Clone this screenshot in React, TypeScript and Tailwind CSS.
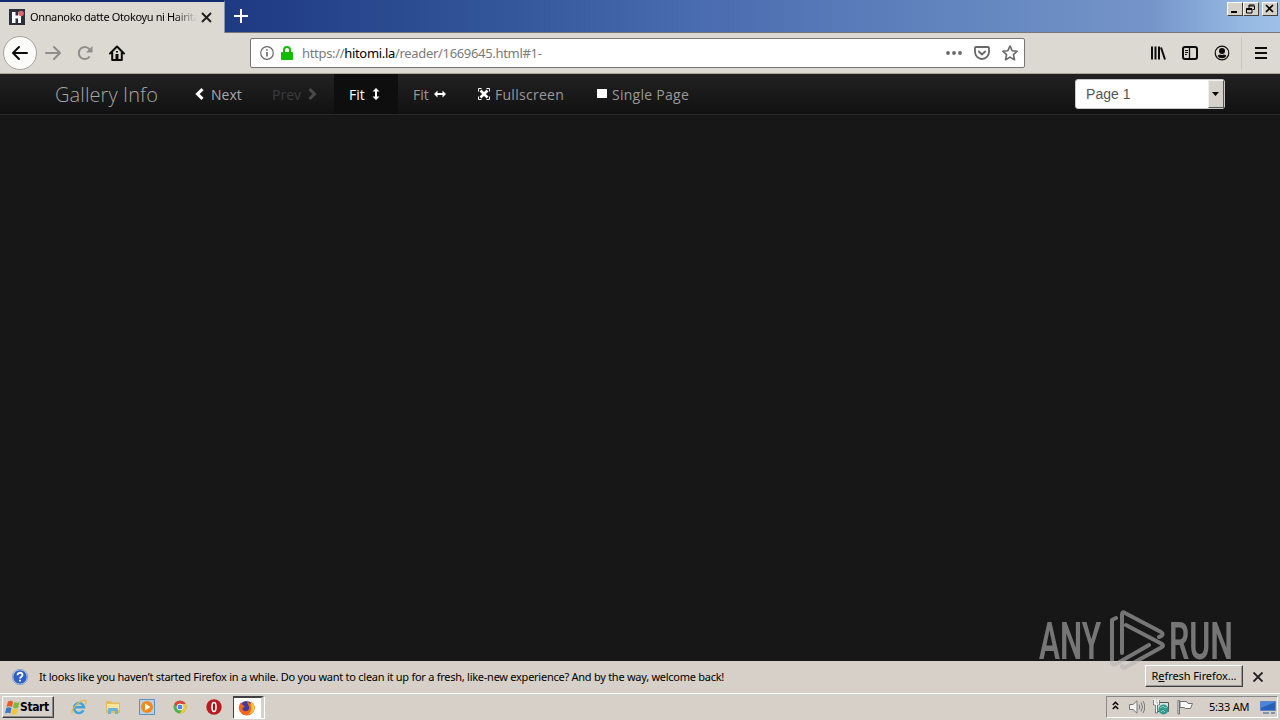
import React from 'react';

interface INavItem {
	label: string;
	className: string;
	icon: React.ReactNode;
	iconFirst?: boolean;
}

const navItems: INavItem[] = [
	{
		label: 'Next',
		className: 'w-[77px] pl-[15px] gap-[7px] text-[#a8a8a8]',
		iconFirst: true,
		icon: (
			<svg width="9" height="12" viewBox="0 0 9 12">
				<path d="M7.500 1.200 2.500 6l5 4.800" fill="none" stroke="#fff" strokeWidth="3" />
			</svg>
		),
	},
	{
		label: 'Prev',
		className: 'w-[77px] pl-[15px] gap-[7px] text-[#3c3c3c]',
		icon: (
			<svg width="9" height="12" viewBox="0 0 9 12">
				<path d="m1.500 1.200 5 4.800-5 4.800" fill="none" stroke="#4a4a4a" strokeWidth="3" />
			</svg>
		),
	},
	{
		label: 'Fit',
		className: 'w-[64px] pl-[15px] gap-[7px] text-white bg-[#0e0e0e]',
		icon: (
			<svg width="8" height="12" viewBox="0 0 8 12" fill="#fff">
				<path d="M4 0l3.500 3.500H5v5h2.500L4 12 .5 8.500H3v-5H.5z" />
			</svg>
		),
	},
	{
		label: 'Fit',
		className: 'w-[64px] pl-[15px] gap-[5px] text-[#999]',
		icon: (
			<svg width="12" height="8" viewBox="0 0 12 8" fill="#fff">
				<path d="M0 4 3.500.5V3h5V.5L12 4 8.500 7.500V5h-5v2.500z" />
			</svg>
		),
	},
	{
		label: 'Fullscreen',
		className: 'w-[119px] pl-[16px] gap-[5px] text-[#999] tracking-[0.28px]',
		iconFirst: true,
		icon: (
			<svg width="12" height="12" viewBox="0 0 12 12" fill="none" stroke="#fff">
				<path d="M.5 3.500v-3h3M8.500.5h3v3M11.500 8.500v3h-3M3.500 11.500h-3v-3" />
				<path d="m2.500 2.500 7 7m0-7-7 7" strokeWidth="2.600" />
			</svg>
		),
	},
	{
		label: 'Single Page',
		className: 'w-[123px] pl-[16px] gap-[6px] text-[#999] tracking-[0.27px]',
		iconFirst: true,
		icon: <span className="block w-[10px] h-[9px] mr-[-1px] mt-[-1px] bg-white" />,
	},
];

const TitleBar = () => (
	<div className="flex h-[33px] border-b border-[#77767a] bg-[linear-gradient(90deg,#112f7a_0%,#203c84_20%,#34579b_40%,#4a6cb0_55%,#5f82bd_72%,#7595c9_90%,#94b8e2_97%,#9fc1e9_100%)]">
		<div className="flex w-[225px] h-[33px] mb-[-1px] pl-[9px] pt-[2px] items-center bg-[#dcd9d2] border-t-2 border-t-[#112c70] border-r border-r-[#8995ae]">
			<svg width="16" height="16" viewBox="0 0 16 16" className="shrink-0 mt-[-3px]">
				<path d="M0 0h16v16H0z" fill="#2b303b" />
				<path d="M3 3h3.500v3.500H9V3h3v11H9V9.500H6.500V14H3z" fill="#fff" />
				<circle cx="12" cy="4.500" r="2.800" fill="#d9686c" />
			</svg>
			<div className="ml-[5px] mt-[-2px] w-[167px] overflow-hidden whitespace-nowrap text-[11px] tracking-[-0.36px] text-black [mask-image:linear-gradient(90deg,#000_86%,transparent)]">
				Onnanoko datte Otokoyu ni Hairita
			</div>
			<svg width="11" height="11" viewBox="0 0 11 11" className="ml-[4px] mt-[-2px] shrink-0">
				<path d="m1 1 9 9m0-9-9 9" stroke="#1c1c1c" strokeWidth="1.800" />
			</svg>
		</div>
		<svg width="14" height="14" viewBox="0 0 14 14" className="ml-[9px] mt-[9px]">
			<path d="M7 0v14M0 7h14" stroke="#fff" strokeWidth="2" />
		</svg>
		<div className="ml-auto mr-[2px] mt-[2px] flex">
			<WinButton>
				<path d="M3 9h6" strokeWidth="2" />
			</WinButton>
			<WinButton>
				<path d="M5 2h5.500M5 3h5.500v3.500H8.500M5 2v3M2.500 5.500h5.500M2.500 6.500h5.500v3.500h-5.500v-4.500" />
			</WinButton>
			<span className="w-[3px]" />
			<WinButton>
				<path d="m3 2 7 7m0-7-7 7" strokeWidth="1.700" />
			</WinButton>
		</div>
	</div>
);

const WinButton = ({ children }: { children: React.ReactNode }) => (
	<div className="w-[16px] h-[14px] bg-[#d6d2ca] border border-t-white border-l-white border-r-[#404040] border-b-[#404040]">
		<svg width="13" height="12" viewBox="0 0 13 12" fill="none" stroke="#000">
			{children}
		</svg>
	</div>
);

const ToolBar = () => (
	<div className="flex h-[41px] items-center bg-[#dcd9d2] border-b border-[#aaa8a2] pl-[3px]">
		<div className="flex w-[34px] h-[34px] items-center justify-center rounded-full bg-[#fbfbfa] border border-[#a5a39e]">
			<svg width="18" height="16" viewBox="0 0 18 16" fill="none" stroke="#0c0c0d" strokeWidth="2" strokeLinecap="round" strokeLinejoin="round">
				<path d="M16 8H2M8 2 2 8l6 6" />
			</svg>
		</div>
		<svg width="18" height="16" viewBox="0 0 18 16" className="ml-[7px]" fill="none" stroke="#8f8d89" strokeWidth="2" strokeLinecap="round" strokeLinejoin="round">
			<path d="M2 8h14m-6-6 6 6-6 6" />
		</svg>
		<svg width="16" height="16" viewBox="0 0 16 16" className="ml-[15px]" fill="none" stroke="#8f8d89" strokeWidth="2">
			<path d="M12.700 11.500A6 6 0 1 1 13 5" />
			<path d="M15.500 1v6.500H9z" fill="#8f8d89" stroke="none" />
		</svg>
		<svg width="16" height="16" viewBox="0 0 16 16" className="ml-[16px]">
			<path d="M1 8.500 8 1.500l7 7M3.200 7.500V15h9.600V7.500" fill="none" stroke="#0c0c0d" strokeWidth="2" strokeLinejoin="round" strokeLinecap="round" />
			<path d="M6.500 9h3v6h-3z" fill="#0c0c0d" />
			<path d="M7 6h2v1.500H7z" fill="#0c0c0d" />
		</svg>
		<div className="ml-[125px] flex w-[775px] h-[30px] items-center bg-white border border-[#77767a] rounded-[2px]">
			<svg width="14" height="14" viewBox="0 0 14 14" className="ml-[9px]" fill="none" stroke="#68686a">
				<circle cx="7" cy="7" r="6.300" strokeWidth="1.200" />
				<path d="M7 6v4.500M7 3.300v1.500" strokeWidth="1.600" />
			</svg>
			<svg width="12" height="14" viewBox="0 0 12 14" className="ml-[7px]">
				<path d="M3 7V4a3 3 0 0 1 6 0v3" fill="none" stroke="#12bc00" strokeWidth="2" />
				<rect y="6" width="12" height="8" rx="1" fill="#12bc00" />
			</svg>
			<div className="ml-[9px] mt-px w-[638px] whitespace-nowrap text-[13px] tracking-[-0.32px] text-[#7b7b7b]">
				https://<span className="text-black">hitomi.la</span>/reader/1669645.html#1-
			</div>
			<svg width="16" height="4" viewBox="0 0 16 4" className="ml-[6px]" fill="#68686a">
				<circle cx="2" cy="2" r="1.900" />
				<circle cx="8" cy="2" r="1.900" />
				<circle cx="14" cy="2" r="1.900" />
			</svg>
			<svg width="16" height="16" viewBox="0 0 16 16" className="ml-[12px]" fill="none" stroke="#68686a" strokeWidth="1.800" strokeLinecap="round" strokeLinejoin="round">
				<path d="M2 2h12a1 1 0 0 1 1 1v4a7 7 0 0 1-14 0V3a1 1 0 0 1 1-1z" />
				<path d="M4.800 6.500 8 9.500l3.200-3" />
			</svg>
			<svg width="16" height="16" viewBox="0 0 16 16" className="ml-[12px]" fill="none" stroke="#68686a" strokeWidth="1.600" strokeLinejoin="round">
				<path d="m8 1 2.100 4.700 5.100.5-3.800 3.400 1.100 5.100L8 12.100l-4.500 2.600 1.100-5.100L.8 6.200l5.100-.5z" />
			</svg>
		</div>
		<svg width="16" height="16" viewBox="0 0 16 16" className="ml-[125px]" stroke="#0c0c0d" strokeWidth="2" fill="none">
			<path d="M2 1.500v13M5.500 1.500v13M9 1.500v13M11 2.500l4 12" />
		</svg>
		<svg width="16" height="14" viewBox="0 0 16 14" className="ml-[16px]" stroke="#0c0c0d" fill="none">
			<rect x="1" y="1" width="14" height="12" rx="2" strokeWidth="2" />
			<path d="M7.500 1v12" strokeWidth="1.300" />
			<path d="M3 4.500h3M3 6.500h3M3 8.500h2" />
		</svg>
		<svg width="16" height="16" viewBox="0 0 16 16" className="ml-[16px]">
			<circle cx="8" cy="8" r="6.800" fill="none" stroke="#0c0c0d" strokeWidth="1.200" />
			<circle cx="8" cy="6" r="3" fill="#0c0c0d" />
			<path d="M3.500 11Q5 8.500 8 10q3-1.500 4.500 1A5.500 5.500 0 0 1 3.500 11z" fill="#0c0c0d" />
		</svg>
		<span className="ml-[11px] h-[33px] w-px bg-[#c9c6bf]" />
		<svg width="12" height="12" viewBox="0 0 12 12" className="ml-[13px]">
			<path d="M0 1h12M0 6h12M0 11h12" stroke="#0c0c0d" strokeWidth="2" />
		</svg>
	</div>
);

const ReaderNav = () => (
	<div className="flex h-[41px] pl-[55px] bg-[linear-gradient(#222,#111)] border-b border-[#292929] font-['Open_Sans','Noto_Sans',sans-serif]">
		<div className="w-[125px] pt-[7px] whitespace-nowrap text-[20px] leading-[27px] tracking-[0.1px] font-light text-[#a5a5a5]">
			Gallery Info
		</div>
		{navItems.map((item, idx) => (
			<div key={idx} className={`flex items-center whitespace-nowrap text-[14px] ${item.className}`}>
				{item.iconFirst && item.icon}
				<span className="mt-px">{item.label}</span>
				{!item.iconFirst && item.icon}
			</div>
		))}
		<div className="ml-auto mr-[55px] mt-[5px] flex w-[150px] h-[30px] rounded-[3px] border border-[#c8c8c8] bg-white">
			<span className="pl-[10px] flex-1 font-['Liberation_Sans',sans-serif] text-[14px] leading-[28px] tracking-[0.05px] text-[#555]">
				Page 1
			</span>
			<span className="flex w-[16px] h-[28px] items-center justify-center bg-[#d6d2ca] border border-t-[#eee] border-l-[#eee] border-r-[#555] border-b-[#555]">
				<svg width="7" height="4" viewBox="0 0 7 4" className="mr-px">
					<path d="M0 0h7L3.500 4z" />
				</svg>
			</span>
		</div>
	</div>
);

const Watermark = () => (
	<svg width="200" height="68" viewBox="0 0 200 68" className="absolute left-[1037px] top-[607px] opacity-60">
		<g fill="#b5b5b5" fontFamily="Roboto, sans-serif" fontSize="51" fontWeight="600">
			<text x="2" y="52" textLength="62" lengthAdjust="spacingAndGlyphs">
				ANY
			</text>
			<text x="132" y="52" textLength="64" lengthAdjust="spacingAndGlyphs">
				RUN
			</text>
		</g>
		<path
			d="M79 11 75 13v42q0 4 4 2l33-19M122 30q6-2 2-5L88 6q-3-2-3 2v38M89 18l36 19q2 2 0 3L89 60q-3 2-4-1"
			fill="none"
			stroke="#b5b5b5"
			strokeWidth="4"
			strokeLinejoin="round"
			strokeLinecap="round"
		/>
	</svg>
);

const Notification = () => (
	<div className="flex h-[32px] items-center bg-[#d6d0c8] pl-[12px] text-[11px] text-black">
		<svg width="16" height="16" viewBox="0 0 16 16">
			<circle cx="8" cy="8" r="7.300" fill="#2e61c4" stroke="#e8eefa" />
			<circle cx="8" cy="8" r="7.700" fill="none" stroke="#5875a8" strokeWidth=".6" />
			<path d="M5.500 6.200C5.500 3 10.500 3 10.500 6c0 1.700-2.500 1.700-2.500 3.500M8 10.800v1.800" fill="none" stroke="#fff" strokeWidth="1.800" />
		</svg>
		<span className="ml-[11px] w-[1106px] whitespace-nowrap tracking-[-0.26px]">
			It looks like you haven’t started Firefox in a while. Do you want to clean it up for a fresh, like-new experience? And by the way, welcome back!
		</span>
		<button className="w-[98px] h-[22px] mt-[-2px] whitespace-nowrap tracking-[-0.08px] bg-[#d6d0c8] border border-t-white border-l-white border-r-[#404040] border-b-[#404040] shadow-[inset_-1px_-1px_#999]">
			R<u>e</u>fresh Firefox...
		</button>
		<svg width="10" height="10" viewBox="0 0 10 10" className="ml-[10px]">
			<path d="m.5.5 9 9m0-9-9 9" stroke="#1c1c1c" strokeWidth="1.900" />
		</svg>
	</div>
);

const TaskBar = () => (
	<div className="flex h-[27px] items-center bg-[#d6d0c8] border-t border-white pl-[2px] text-[11px] text-black">
		<div className="flex w-[52px] h-[22px] items-center pl-[2px] border border-t-white border-l-white border-r-[#404040] border-b-[#404040] shadow-[inset_-1px_-1px_#888]">
			<svg width="15" height="15" viewBox="0 0 15 15" className="shrink-0">
				<path d="M3 1.500q2.500-1.500 5 0L7 7Q4.500 5.500 1.500 7z" fill="#e8582a" />
				<path d="M9 2q2.500 1.500 5.500 0L13 8q-2.500 1-5-.5z" fill="#7fb93c" />
				<path d="M1.300 8q2.700-1.500 5.200 0L5.300 13.500Q3 12 0 13.500z" fill="#3a78c8" />
				<path d="M7.500 8.500q2.500 1.500 5.300.3l-1.300 5.200q-2.500 1.200-5.200-.3z" fill="#f6c42e" />
			</svg>
			<span className="font-['DejaVu_Sans_Condensed','DejaVu_Sans',sans-serif] font-bold text-[12px] tracking-[-0.4px]">Start</span>
		</div>
		<svg width="16" height="16" viewBox="0 0 16 16" className="ml-[17px]" fill="none">
			<path d="M12.500 11.300A5 5 0 1 1 13 8.300H4" stroke="#41a4dc" strokeWidth="2.500" />
			<path d="M1.500 14.500C-1 11 9 .5 14.500 1.500q1.500.8-.5 4" stroke="#e5b944" strokeWidth="1.200" />
		</svg>
		<svg width="16" height="16" viewBox="0 0 16 16" className="ml-[18px]">
			<path d="M1 2h5l1 1.500h8V14H1z" fill="#e5bd58" />
			<path d="M2 5h12v6H2z" fill="#f8e49c" />
			<path d="M3 15v-5q0-1 1-1h8q1 0 1 1v5h-3v-3H6v3z" fill="#67b5df" />
		</svg>
		<svg width="16" height="16" viewBox="0 0 16 16" className="ml-[18px]">
			<path d="M.5.5h15v15H.5z" fill="#b3d3ed" stroke="#5b91be" />
			<circle cx="8" cy="8" r="6" fill="#ef8b1c" />
			<path d="M6 4.500 11.500 8 6 11.500z" fill="#fff" />
		</svg>
		<svg width="14" height="14" viewBox="0 0 14 14" className="ml-[18px]">
			<circle cx="7" cy="7" r="6.500" fill="#4caf50" />
			<path d="M1.400 3.700A6.500 6.500 0 0 1 12.600 4H7L4.300 8.500z" fill="#dc4535" />
			<path d="M12.700 4A6.500 6.500 0 0 1 7 13.500L9.700 8.500 7 4z" fill="#fbc82c" />
			<circle cx="7" cy="7" r="3" fill="#4a87e8" stroke="#fff" />
		</svg>
		<svg width="16" height="16" viewBox="0 0 16 16" className="ml-[19px]">
			<circle cx="8" cy="8" r="7.700" fill="#b51b20" />
			<ellipse cx="8" cy="8" rx="2" ry="4.500" fill="#a01015" stroke="#fff" strokeWidth="1.600" />
		</svg>
		<div className="ml-[11px] flex w-[31px] h-[22px] pl-[4px] items-center bg-white border-t-2 border-l border-t-[#404040] border-l-[#404040] border-r-[3px] border-r-[#d6d0c8] shadow-[1px_1px_#fff]">
			<svg width="17" height="16" viewBox="0 0 17 16">
				<circle cx="8.500" cy="8" r="7" fill="#3d3aa6" />
				<path d="M3 2Q-2 9 4 14c6 4 14-1 12.500-8Q16 3 13 1.500q.5 2-.5 3Q11 2 9 .5q0 3 1.500 5 2 4-1.500 5.500-4 1-4.500-3L7 7 5 5Q3 4 3 2z" fill="#f5661e" />
				<path d="M13 1.500Q17.500 5 16 10q-2 4-6 4.500 5-3.500 2.500-10z" fill="#ffc928" />
			</svg>
		</div>
		<div className="ml-auto mr-[2px] flex w-[172px] h-[22px] items-center border border-t-[#888] border-l-[#888] border-r-white border-b-white">
			<svg width="7" height="9" viewBox="0 0 7 9" className="ml-[5px] mb-[4px]">
				<path d="m.8 4 2.700-2.700L6.200 4M.8 8l2.700-2.700L6.200 8" fill="none" stroke="#000" strokeWidth="1.500" />
			</svg>
			<svg width="16" height="14" viewBox="0 0 16 14" className="ml-[10px]" fill="none" stroke="#77777a">
				<path d="M.5 4.500H4L8 .8v12.400L4 9.500H.5z" fill="#f3f3f3" />
				<path d="M10 4.500q1.500 2.500 0 5M12 2.500q3 4.500 0 9M14 1q3.500 6 0 12" />
			</svg>
			<svg width="16" height="16" viewBox="0 0 16 16" className="ml-[8px]">
				<path d="M4.500 3.500h11v9h-11z" fill="#d5e5e6" stroke="#555" />
				<circle cx="10.500" cy="10.500" r="5" fill="#2d9990" />
				<path d="m7 9 3-2 2 2 2-1M8 13l2-2 2 2" fill="none" stroke="#85d4b0" />
				<path d="M1.500.5v5h2v8M5.500.5v5h-2" fill="none" stroke="#fff" strokeWidth="2" />
				<path d="M.5 1v5h2v8h2V6h2V1" fill="none" stroke="#555" strokeWidth=".7" />
			</svg>
			<svg width="16" height="15" viewBox="0 0 16 15" className="ml-[8px]" fill="#fafafa" stroke="#707070">
				<path d="M1 .5h1.500V14H1z" />
				<path d="M3 1.500h6.500l1.500 2h4.500l-2 5H8.500L7 7.500H3z" />
			</svg>
			<span className="ml-[16px] w-[44px] whitespace-nowrap tracking-[-0.2px]">5:33 AM</span>
			<svg width="16" height="14" viewBox="0 0 16 14" className="ml-[7px]">
				<path d="M.5 1.500h15v9H.5z" fill="#2860b8" stroke="#5985c9" />
				<path d="M1 2h14L1 8z" fill="#4a85d8" />
				<path d="M3 13h6M11 13h4" stroke="#37588d" />
			</svg>
		</div>
	</div>
);

const App = () => {
	return (
		<div className="relative flex w-[1280px] h-[720px] flex-col overflow-hidden bg-[#171717] font-['Noto_Sans','DejaVu_Sans',sans-serif]">
			<TitleBar />
			<ToolBar />
			<ReaderNav />
			<div className="flex-1 bg-[#171717]" />
			<Notification />
			<TaskBar />
			<Watermark />
		</div>
	);
};

export default App;
